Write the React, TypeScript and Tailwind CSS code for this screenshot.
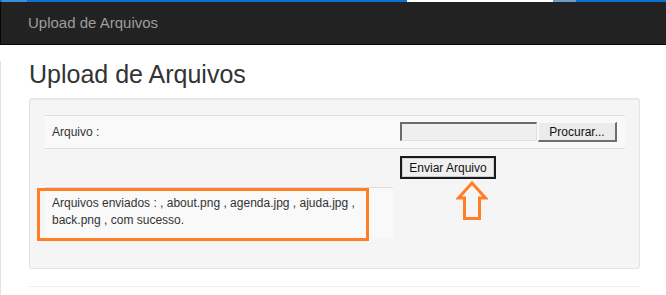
export default function App() {
  return (
    <div className="w-[666px] h-[295px] overflow-hidden bg-white font-['Liberation_Sans',Arial,sans-serif] text-[#333]">
      {/* browser chrome remnant */}
      <div className="flex h-[2px] bg-[#0b72d3]">
        <div className="w-[2px]" />
        <div className="w-[25px] bg-[#3f8fd8]" />
        <div className="w-[380px]" />
        <div className="w-[146px] bg-white" />
        <div className="w-[23px] bg-[#6d9dcc]" />
      </div>

      {/* navbar */}
      <div className="h-[43px] bg-[#222] border-l border-b border-[#080808] pl-[27px] flex items-center">
        <span className="text-[15px] text-[#9d9d9d]">Upload de Arquivos</span>
      </div>

      <div className="h-[250px] border-l border-[#e3e3e3] pl-[28px] pr-[26px]">
        <h2 className="mt-[16px] mb-[10px] text-[25px] leading-[27px] font-normal text-[#333]">Upload de Arquivos</h2>

        <div className="h-[171px] bg-[#f5f5f5] border border-[#e3e3e3] rounded-[3px] pt-[16px] pl-[15px] pr-[14px] shadow-[inset_0_1px_1px_rgba(0,0,0,0.05)]">
          <div className="relative text-[12px] leading-[17px]">
            {/* row 1 */}
            <div className="flex bg-[#f9f9f9] border-t border-[#ddd] h-[33px]">
              <div className="w-[348px] pl-[7px] flex items-center">Arquivo :</div>
              <div className="flex-1 pl-[7px] pt-[6px] flex items-start">
                <div className="w-[137px] h-[19px] bg-[#efefef] border-t-2 border-l-2 border-t-[#6b6b6b] border-l-[#6b6b6b] border-b border-r border-b-[#e0e0e0] border-r-[#e0e0e0]" />
                <button className="ml-[1px] w-[79px] h-[20px] bg-[#ebebeb] border border-t-[#f8f8f8] border-l-[#f8f8f8] border-b-2 border-r-2 border-b-[#6e6e6e] border-r-[#6e6e6e] text-[12px] leading-none text-[#111] flex items-center justify-center">
                  Procurar...
                </button>
              </div>
            </div>

            {/* row 2 */}
            <div className="flex border-t border-[#ddd] h-[39px]">
              <div className="w-[348px]" />
              <div className="flex-1 pl-[7px] pt-[7px]">
                <button className="w-[96px] h-[23px] bg-[#f0f0f0] border-2 border-[#1b1b1b] outline outline-1 -outline-offset-3 outline-[#cfcfcf] text-[12px] leading-none text-[#111] flex items-center justify-center">
                  Enviar Arquivo
                </button>
              </div>
            </div>

            {/* row 3 */}
            <div className="flex">
              <div className="relative w-[348px] bg-[#f9f9f9] border-t border-[#ddd] pl-[7px] pr-[7px] pt-[7px] pb-[10px]">
                Arquivos enviados : , about.png , agenda.jpg , ajuda.jpg , back.png , com sucesso.
                <div className="absolute left-[-8px] top-[0px] w-[332px] h-[53px] border-[3px] border-[#ff7f27]" />
              </div>
            </div>

            {/* annotation arrow */}
            <svg className="absolute left-[411px] top-[66px]" width="32" height="40" viewBox="0 0 32 40">
              <path
                d="M16 2 L29.5 17 L23.5 17 L23.5 37.5 L8.5 37.5 L8.5 17 L2.5 17 Z"
                fill="none"
                stroke="#ff7f27"
                strokeWidth="3"
                strokeLinejoin="miter"
              />
            </svg>
          </div>
        </div>

        <div className="mt-[17px] border-t border-[#eee]" />
      </div>
    </div>
  )
}
